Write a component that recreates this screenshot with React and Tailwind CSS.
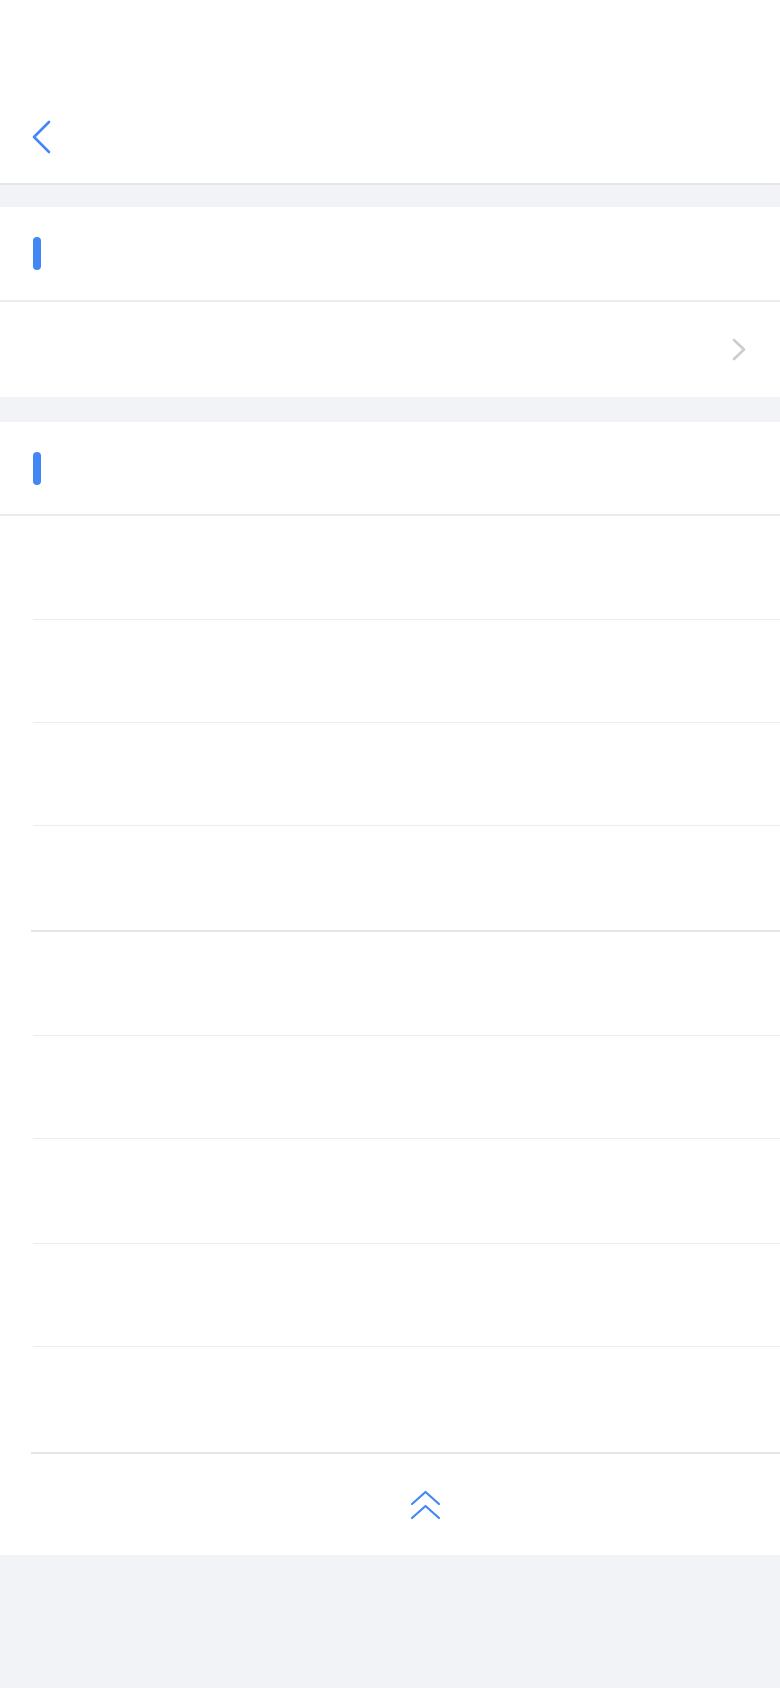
import React from 'react';

const ROWS = [
  { h: 103, strong: false },
  { h: 102, strong: false },
  { h: 102, strong: false },
  { h: 104, strong: true },
  { h: 103, strong: false },
  { h: 102, strong: false },
  { h: 104, strong: false },
  { h: 102, strong: false },
  { h: 105, strong: true },
];

function SectionHeader({ className = '' }) {
  return (
    <div className={`flex items-center bg-white pl-[33px] ${className}`}>
      <div className="w-[8px] h-[33px] rounded-full bg-[#4287f5]" />
    </div>
  );
}

export default function App() {
  return (
    <div className="min-h-[1688px] bg-[#f2f3f7] font-['Liberation_Sans',sans-serif]">
      {/* nav bar */}
      <div className="h-[185px] bg-white border-b-2 border-[#e5e5ea] flex items-start pt-[120px] pl-[32px]">
        <button className="p-0">
          <svg width="20" height="34" viewBox="0 0 20 34" fill="none">
            <path d="M17 2 L2 17 L17 32" stroke="#4287f5" strokeWidth="2.6" strokeLinecap="round" strokeLinejoin="round" />
          </svg>
        </button>
      </div>

      <div className="h-[22px]" />

      <SectionHeader className="h-[95px] border-b-2 border-[#ededee]" />
      <div className="h-[95px] bg-white flex items-center justify-end pr-[33px]">
        <svg width="15" height="23" viewBox="0 0 15 23" fill="none">
          <path d="M2 2 L12 11.5 L2 21" stroke="#cdcdd1" strokeWidth="2.6" strokeLinecap="round" strokeLinejoin="round" />
        </svg>
      </div>

      <div className="h-[25px]" />

      <SectionHeader className="h-[94px] border-b-2 border-[#ebebeb]" />
      <div className="bg-white">
        {ROWS.map((r, i) => (
          <div key={i} className={r.strong ? 'ml-[31px] border-b-2 border-[#e4e4ea]' : 'ml-[33px] border-b border-[#ececec]'}>
            <div style={{ height: r.h }} />
          </div>
        ))}
        <div className="h-[101px] flex items-center justify-center pl-[71px]">
          <svg width="31" height="30" viewBox="0 0 31 30" fill="none">
            <path d="M2 14 L15.5 2 L29 14" stroke="#4287f5" strokeWidth="2.2" strokeLinecap="round" strokeLinejoin="round" />
            <path d="M2 28 L15.5 16 L29 28" stroke="#4287f5" strokeWidth="2.2" strokeLinecap="round" strokeLinejoin="round" />
          </svg>
        </div>
      </div>
    </div>
  );
}
